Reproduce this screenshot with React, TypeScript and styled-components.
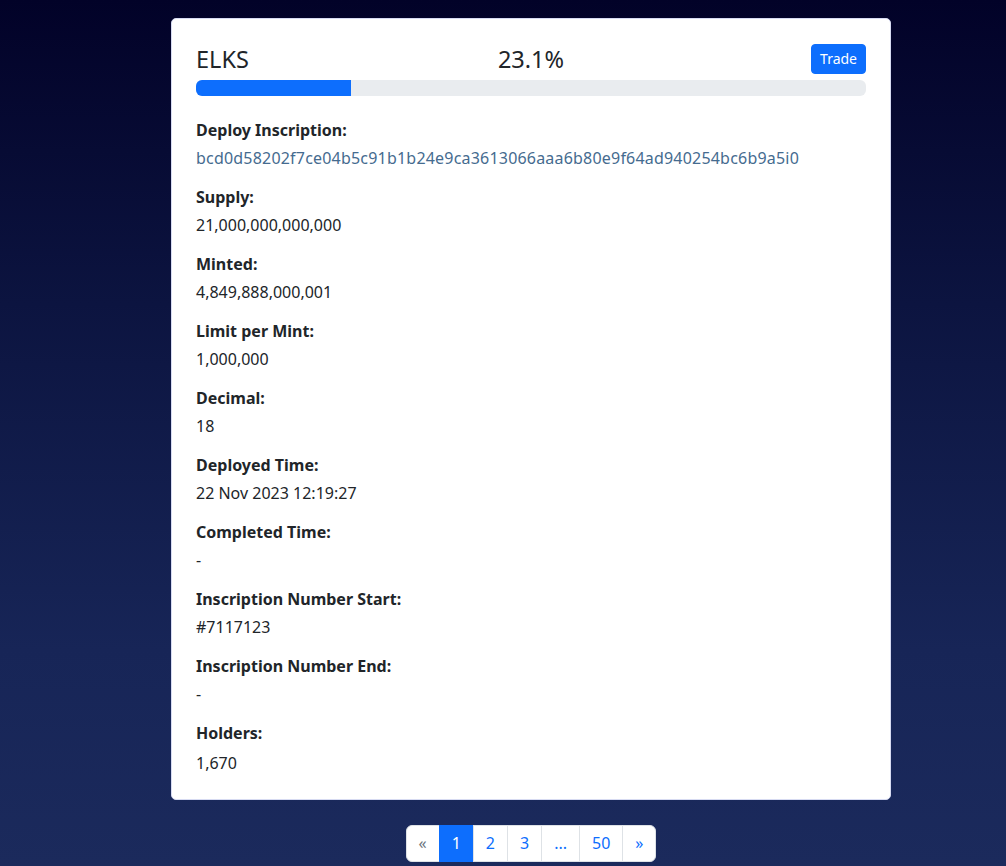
import styled, { createGlobalStyle } from 'styled-components'

const GlobalStyle = createGlobalStyle`
  html, body {
    margin: 0;
    padding: 0;
  }
  body {
    min-height: 866px;
    background: linear-gradient(180deg, #020228 0%, #0c1440 35%, #172557 75%, #1b2a5c 100%);
    font-family: 'Noto Sans', 'Open Sans', sans-serif;
    color: #212529;
  }
`

const Page = styled.div`
  width: 720px;
  margin-left: 171px;
  padding-top: 18px;
  display: flex;
  flex-direction: column;
  align-items: center;
`

const Card = styled.div`
  width: 100%;
  box-sizing: border-box;
  background: #fff;
  border: 1px solid #d7dbf2;
  border-radius: 5px;
  padding: 24px 24px 24px;
`

const Header = styled.div`
  display: grid;
  grid-template-columns: 1fr auto 1fr;
  align-items: center;
  height: 31px;
  margin-bottom: 6px;
`

const Ticker = styled.div`
  font-size: 23.5px;
  line-height: 30px;
`

const Percent = styled.div`
  font-size: 23.5px;
  line-height: 30px;
  text-align: center;
`

const TradeButton = styled.button`
  justify-self: end;
  background: #0d6efd;
  color: #fff;
  border: 1px solid #0d6efd;
  border-radius: 4px;
  font-family: inherit;
  font-size: 14px;
  line-height: 20px;
  padding: 4px 8px;
  cursor: pointer;
`

const Track = styled.div`
  height: 16px;
  background: #e9ecef;
  border-radius: 6px;
  overflow: hidden;
  margin-bottom: 22px;
`

const Fill = styled.div`
  height: 100%;
  background: #0d6efd;
`

const Field = styled.div`
  margin-bottom: 15px;
  &:last-child {
    margin-bottom: 0;
  }
  &:last-child > div:first-child {
    margin-bottom: 6px;
  }
`

const Label = styled.div`
  font-weight: 700;
  font-size: 16px;
  line-height: 24px;
  margin-bottom: 4px;
`

const Value = styled.div<{ link?: boolean }>`
  font-size: 16px;
  line-height: 24px;
  color: ${(p) => (p.link ? '#456b8f' : '#212529')};
  letter-spacing: ${(p) => (p.link ? '0.2px' : '0')};
`

const Pagination = styled.ul`
  display: flex;
  list-style: none;
  margin: 25px 0 0;
  padding: 0;
`

const PageItem = styled.li<{ active?: boolean; muted?: boolean }>`
  padding: 6px 12px;
  font-size: 16px;
  line-height: 23px;
  background: ${(p) => (p.active ? '#0d6efd' : '#fff')};
  color: ${(p) => (p.active ? '#fff' : p.muted ? '#6c757d' : '#0d6efd')};
  border: 1px solid ${(p) => (p.active ? '#0d6efd' : '#dee2e6')};
  margin-left: -1px;
  &:first-child {
    margin-left: 0;
    border-radius: 6px 0 0 6px;
  }
  &:last-child {
    border-radius: 0 6px 6px 0;
  }
`

const fields: { label: string; value: string; link?: boolean }[] = [
  { label: 'Deploy Inscription:', value: 'bcd0d58202f7ce04b5c91b1b24e9ca3613066aaa6b80e9f64ad940254bc6b9a5i0', link: true },
  { label: 'Supply:', value: '21,000,000,000,000' },
  { label: 'Minted:', value: '4,849,888,000,001' },
  { label: 'Limit per Mint:', value: '1,000,000' },
  { label: 'Decimal:', value: '18' },
  { label: 'Deployed Time:', value: '22 Nov 2023 12:19:27' },
  { label: 'Completed Time:', value: '-' },
  { label: 'Inscription Number Start:', value: '#7117123' },
  { label: 'Inscription Number End:', value: '-' },
  { label: 'Holders:', value: '1,670' },
]

const progress = 23.1

export default function App() {
  return (
    <>
      <GlobalStyle />
      <Page>
        <Card>
          <Header>
            <Ticker>ELKS</Ticker>
            <Percent>{progress}%</Percent>
            <TradeButton>Trade</TradeButton>
          </Header>
          <Track>
            <Fill style={{ width: `${progress}%` }} />
          </Track>
          {fields.map((f) => (
            <Field key={f.label}>
              <Label>{f.label}</Label>
              <Value link={f.link}>{f.value}</Value>
            </Field>
          ))}
        </Card>
        <Pagination>
          <PageItem muted>«</PageItem>
          <PageItem active>1</PageItem>
          <PageItem>2</PageItem>
          <PageItem>3</PageItem>
          <PageItem>...</PageItem>
          <PageItem>50</PageItem>
          <PageItem>»</PageItem>
        </Pagination>
      </Page>
    </>
  )
}
